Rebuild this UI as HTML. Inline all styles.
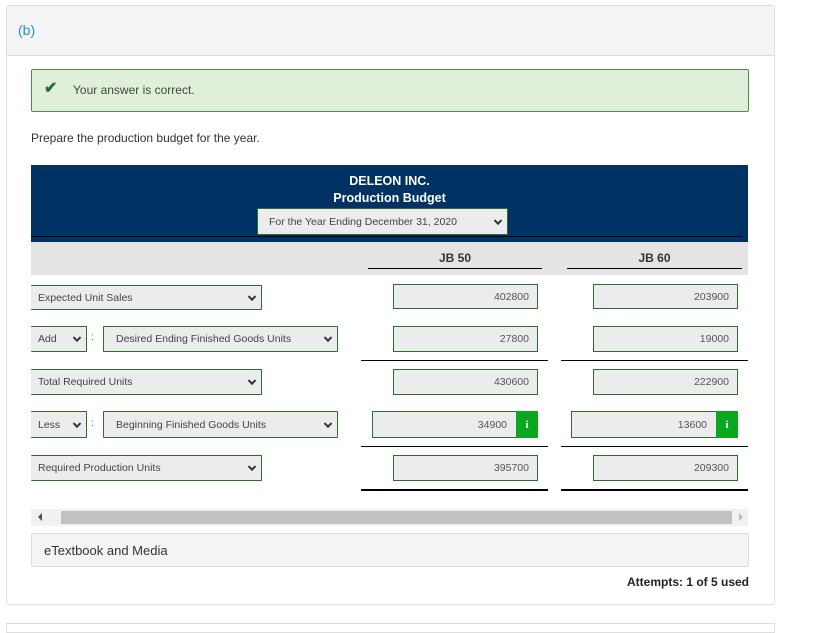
<!DOCTYPE html>
<html><head><style>
*{box-sizing:border-box;margin:0;padding:0}
body{width:838px;height:626px;background:#fff;font-family:"Liberation Sans",sans-serif;position:relative;overflow:hidden;color:#333}
.a{position:absolute}
.sel{position:absolute;background:#ececec;border:1px solid #2e6b2e;font-size:10.5px;color:#444;padding-left:7px;display:flex;align-items:center;border-radius:1px}
.sel .c{position:absolute;right:6px;top:50%;width:6px;height:6px;border-right:2px solid #333;border-bottom:2px solid #333;transform:translateY(-70%) rotate(45deg)}
.inp{position:absolute;background:#ececec;border:1px solid #2e6b2e;font-size:10.5px;color:#555;display:flex;align-items:center;justify-content:flex-end;padding-right:8px;height:25px}
.ib{position:absolute;right:-1px;top:-1px;width:22px;height:25px;background:#0aa81e;color:#fff;font-weight:bold;font-size:11px;display:flex;align-items:center;justify-content:center;font-family:"Liberation Serif",serif}
.ln{position:absolute;background:#000;height:1px}
</style></head><body>
<div class="a" style="left:6px;top:5px;width:769px;height:600px;border:1px solid #ddd;border-radius:3px"></div>
<div class="a" style="left:7px;top:6px;width:767px;height:50px;background:#f4f4f4;border-bottom:1px solid #ddd"></div>
<div class="a" style="left:18px;top:22px;font-size:14px;color:#2a8bd8">(b)</div>
<div class="a" style="left:31px;top:69px;width:718px;height:43px;background:#dff0d8;border:1px solid #4a8a4a;border-radius:2px"></div>
<div class="a" style="left:44px;top:78px;font-size:16px;color:#2e6b2e;font-weight:bold">✔</div>
<div class="a" style="left:73px;top:83px;font-size:12px;color:#444">Your answer is correct.</div>
<div class="a" style="left:31px;top:131px;font-size:12px;color:#333">Prepare the production budget for the year.</div>
<div class="a" style="left:31px;top:165px;width:717px;height:77px;background:#003263"></div>
<div class="a" style="left:31px;top:173px;width:717px;text-align:center;color:#fff;font-weight:bold;font-size:12.5px;line-height:17px">DELEON INC.<br>Production Budget</div>
<div class="sel" style="left:257px;top:208px;width:251px;height:27px;padding-left:11px">For the Year Ending December 31, 2020<span class="c"></span></div>
<div class="ln" style="left:31px;top:236px;width:711px"></div>
<div class="a" style="left:31px;top:242px;width:717px;height:33px;background:#e4e4e4"></div>
<div class="a" style="left:368px;top:251px;width:174px;text-align:center;font-size:12px;font-weight:bold;color:#333">JB 50</div>
<div class="a" style="left:567px;top:251px;width:175px;text-align:center;font-size:12px;font-weight:bold;color:#333">JB 60</div>
<div class="ln" style="left:368px;top:268px;width:174px"></div>
<div class="ln" style="left:567px;top:268px;width:175px"></div>

<div class="sel" style="left:31px;top:285px;width:231px;height:25px;border-left:none">Expected Unit Sales<span class="c"></span></div>
<div class="inp" style="left:393px;top:284px;width:145px">402800</div>
<div class="inp" style="left:593px;top:284px;width:145px">203900</div>

<div class="sel" style="left:31px;top:326px;width:56px;height:26px;border-left:none">Add<span class="c"></span></div>
<div class="a" style="left:91px;top:332px;font-size:10px;color:#555">:</div>
<div class="sel" style="left:103px;top:326px;width:235px;height:26px;padding-left:12px">Desired Ending Finished Goods Units<span class="c"></span></div>
<div class="inp" style="left:393px;top:326px;width:145px;height:26px">27800</div>
<div class="inp" style="left:593px;top:326px;width:145px;height:26px">19000</div>
<div class="ln" style="left:361px;top:360px;width:187px"></div>
<div class="ln" style="left:561px;top:360px;width:187px"></div>

<div class="sel" style="left:31px;top:369px;width:231px;height:26px;border-left:none">Total Required Units<span class="c"></span></div>
<div class="inp" style="left:393px;top:369px;width:145px;height:26px">430600</div>
<div class="inp" style="left:593px;top:369px;width:145px;height:26px">222900</div>

<div class="sel" style="left:31px;top:411px;width:56px;height:27px;border-left:none">Less<span class="c"></span></div>
<div class="a" style="left:91px;top:418px;font-size:10px;color:#555">:</div>
<div class="sel" style="left:103px;top:411px;width:235px;height:27px;padding-left:12px">Beginning Finished Goods Units<span class="c"></span></div>
<div class="inp" style="left:372px;top:411px;width:166px;height:27px;padding-right:30px">34900<span class="ib" style="height:27px">i</span></div>
<div class="inp" style="left:571px;top:411px;width:167px;height:27px;padding-right:30px">13600<span class="ib" style="height:27px">i</span></div>
<div class="ln" style="left:361px;top:446px;width:187px"></div>
<div class="ln" style="left:561px;top:446px;width:187px"></div>

<div class="sel" style="left:31px;top:455px;width:231px;height:26px;border-left:none">Required Production Units<span class="c"></span></div>
<div class="inp" style="left:393px;top:455px;width:145px;height:26px">395700</div>
<div class="inp" style="left:593px;top:455px;width:145px;height:26px">209300</div>
<div class="ln" style="left:361px;top:489px;width:187px;height:2px"></div>
<div class="ln" style="left:561px;top:489px;width:187px;height:2px"></div>

<div class="a" style="left:31px;top:509px;width:717px;height:17px;background:#f1f1f1"></div>
<div class="a" style="left:61px;top:511px;width:671px;height:13px;background:#c1c1c1"></div>
<div class="a" style="left:38px;top:513px;width:0;height:0;border-top:4px solid transparent;border-bottom:4px solid transparent;border-right:4px solid #505050"></div>
<div class="a" style="left:739px;top:513px;width:0;height:0;border-top:4px solid transparent;border-bottom:4px solid transparent;border-left:4px solid #bbb"></div>
<div class="a" style="left:31px;top:533px;width:718px;height:34px;background:#f4f4f4;border:1px solid #ddd;border-radius:2px;font-size:13px;color:#333;padding:9px 0 0 12px">eTextbook and Media</div>
<div class="a" style="left:549px;top:575px;width:200px;text-align:right;font-size:12px;font-weight:bold;color:#222">Attempts: 1 of 5 used</div>
<div class="a" style="left:6px;top:623px;width:769px;height:10px;border:1px solid #ddd;background:#fff"></div>
</body></html>
